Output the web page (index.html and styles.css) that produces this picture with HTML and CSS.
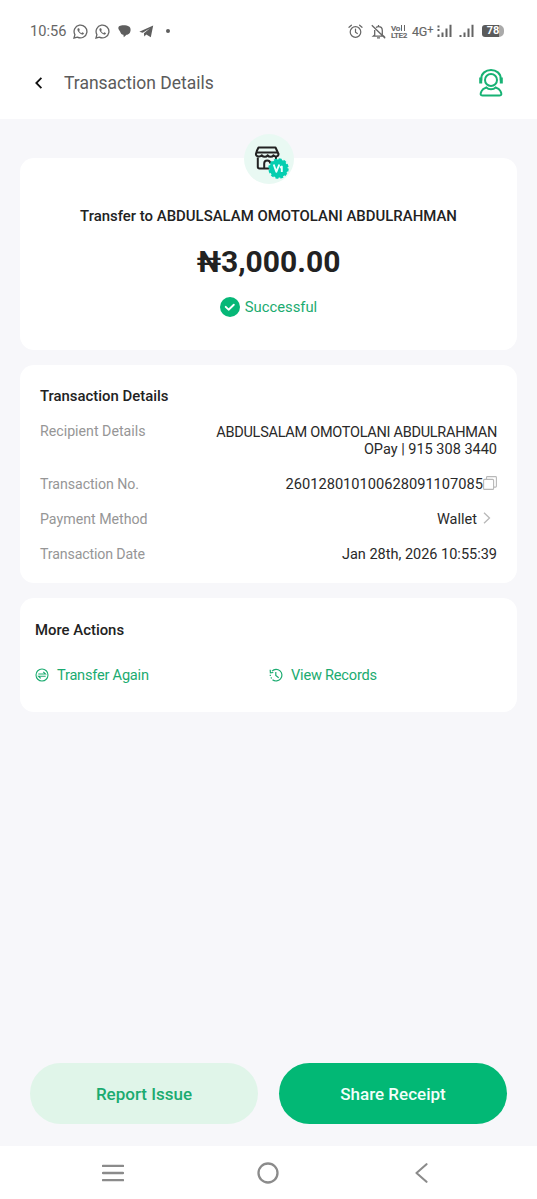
FILE: index.html
```html
<!DOCTYPE html>
<html lang="en">
<head>
<meta charset="utf-8">
<title>Transaction Details</title>
<link rel="stylesheet" href="styles.css">
</head>
<body>
<div class="screen">
  <header class="top">
    <div class="status">
      <div class="status-left">
        <span class="clock">10:56</span>
        <svg class="wa" width="15" height="15" viewBox="0 0 15 15"><path d="M1 14l.9-3.4a6.4 6.4 0 1 1 2.5 2.5z" fill="none" stroke="#666" stroke-width="1.3"/><path d="M5 4.2c-1 .8-.7 2.2.6 3.9s3 2.8 4.2 2.5c1-.3 1.300-1.200 1-1.500L9.300 8.300l-.9.9C7.300 8.700 6.500 7.900 6.100 6.900l.7-.8-.7-1.800z" fill="#666"/></svg>
        <svg class="wa second" width="15" height="15" viewBox="0 0 15 15"><path d="M1 14l.9-3.4a6.4 6.4 0 1 1 2.5 2.5z" fill="none" stroke="#666" stroke-width="1.3"/><path d="M5 4.2c-1 .8-.7 2.2.6 3.9s3 2.8 4.2 2.5c1-.3 1.300-1.200 1-1.500L9.300 8.300l-.9.9C7.300 8.700 6.500 7.900 6.100 6.900l.7-.8-.7-1.800z" fill="#666"/></svg>
        <svg class="chat" width="13" height="13" viewBox="0 0 13 13"><path d="M1.500 1C3.500 0 9 .1 11 1.500c2 1.200 2 4.600.7 6.500-.8 1.200-2.200 1.700-3.200 1.800L5.800 12.200l-.4-2.400C3.400 9.600 2.600 8.200 2.200 6.700L.6 4.200C0 2.900.5 1.500 1.500 1z" fill="#5e5e5e"/></svg>
        <svg class="plane" width="15" height="13" viewBox="0 0 15 13"><path d="M.3 6.700L14.200.5 11.800 12.300 7.300 9.400 5.300 11.500 4.900 8.300 11 3.200 3.700 7.700z" fill="#5e5e5e"/></svg>
        <i class="dot"></i>
      </div>
      <div class="status-right">
        <svg width="15" height="15" viewBox="0 0 15 15" fill="none" stroke="#666" stroke-width="1.2" stroke-linecap="round"><circle cx="7.500" cy="8" r="5.300"/><path d="M7.500 5v3.300L9.300 9.500M1 3.300L3.400 1.200M14 3.300L11.600 1.200"/></svg>
        <svg class="bell" width="15" height="15" viewBox="0 0 15 15" fill="none" stroke="#666" stroke-width="1.3"><path d="M3.700 6v5L2.300 12.200h10.400L11.300 11V6.500C11.300 4 9.700 2.700 7.500 2.700c-1 0-1.800.3-2.500.8M7.500 1v1.500M6 13.800h3M.8 1.200L14.200 14.300"/></svg>
        <div class="volte"><span>Vo<i class="bars"></i></span><span>LTE2</span></div>
        <span class="net">4G<sup>+</sup></span>
        <svg class="sig1" width="15" height="14" viewBox="0 0 15 14" fill="#646464"><path d="M.5 1.500h2v2h-2zM.5 5h2v2h-2zM.5 10.500h2V13h-2zM4.500 8.500h2V13h-2zM8.500 4.500h2V13h-2zM12.500.8h2V13h-2z"/></svg>
        <svg class="sig2" width="15" height="14" viewBox="0 0 15 14" fill="#646464"><path d="M.5 11h2v2h-2zM4.500 8.500h2V13h-2zM8.500 4.500h2V13h-2zM12.500.8h2V13h-2z"/></svg>
        <div class="battery"><span>78</span></div>
      </div>
    </div>
    <div class="bar">
      <svg class="back" width="10" height="14" viewBox="0 0 10 14"><path d="M7.400 1.800L2.300 7l5.100 5.200" fill="none" stroke="#111" stroke-width="1.800"/></svg>
      <h1 class="title">Transaction Details</h1>
      <svg class="support" width="26" height="30" viewBox="0 0 26 30" fill="none" stroke="#17b274" stroke-width="2"><circle cx="13" cy="12" r="6"/><path d="M3.300 12.500V10.500C3.300 5.500 7.600 2 13 2s9.700 3.500 9.700 8.500v2"/><path d="M2.700 9.500v6M23.300 9.500v6" stroke-width="3"/><path d="M8.300 19.500C6 20.200 4.500 21 3.500 23.200c-1.500 3-1 4.300 1 4.300h17c2 0 2.500-1.300 1-4.300-1-2.200-2.500-3-4.800-3.700-1.300 1.300-3 1.800-4.700 1.800s-3.400-.5-4.700-1.800z"/></svg>
    </div>
  </header>
  <main class="content">
    <section class="card summary">
      <div class="avatar"><svg width="50" height="50" viewBox="0 0 50 50"><g fill="none" stroke="#222" stroke-width="2"><path d="M14.500 13.500h17l3 6.500c0 2.600-3.600 3.400-5 1.200-1.200 2.200-4.600 2.200-5.800 0-1.200 2.200-4.600 2.200-5.800 0-1.700 2.200-6 1.400-6-1.200l1-3.300z" stroke-linejoin="round"/><path d="M12 18.500h22M13.800 23.500v9.300q0 1.700 1.700 1.700h10M32 23v4M20.200 34v-4.500a3 3 0 0 1 6 0"/></g><circle cx="34.500" cy="34.500" r="9.200" fill="#05ceb0"/><circle cx="34.500" cy="34.500" r="9.300" fill="none" stroke="#05ceb0" stroke-width="1.800" stroke-dasharray="3 1.870"/><path d="M29.700 30.500l2.600 7.300 3-7.300M36 33.600l1.800-1.100V38" fill="none" stroke="#efffff" stroke-width="1.900" stroke-linejoin="round"/></svg></div>
      <p class="to">Transfer to ABDULSALAM OMOTOLANI ABDULRAHMAN</p>
      <p class="amount">₦3,000.00</p>
      <p class="state"><svg width="20" height="20" viewBox="0 0 20 20"><circle cx="10" cy="10" r="10" fill="#06b777"/><path d="M5.700 9.800l2.900 2.900 5.200-5" fill="none" stroke="#fff" stroke-width="1.900" stroke-linecap="round" stroke-linejoin="round"/></svg><span>Successful</span></p>
    </section>
    <section class="card details">
      <h2>Transaction Details</h2>
      <div class="row recipient"><span class="label">Recipient Details</span><span class="value"><span class="name">ABDULSALAM OMOTOLANI ABDULRAHMAN</span><br>OPay | 915 308 3440</span></div>
      <div class="row"><span class="label number-label">Transaction No.</span><span class="value number">260128010100628091107085</span><svg class="copy" width="14" height="14" viewBox="0 0 14 14" fill="none" stroke="#b8b8b8" stroke-width="1.1"><rect x=".6" y="3.400" width="10" height="10" rx="1"/><path d="M3.500 3.300V1.500q0-.9.9-.9h8.100q.9 0 .9.9v8.700q0 .9-.9.9h-1.700"/></svg></div>
      <div class="row"><span class="label">Payment Method</span><span class="value">Wallet</span><svg class="chev" width="8" height="12" viewBox="0 0 8 12"><path d="M1 .8L6.500 6 1 11.200" fill="none" stroke="#b8b8b8" stroke-width="1.3"/></svg></div>
      <div class="row"><span class="label date-label">Transaction Date</span><span class="value">Jan 28th, 2026 10:55:39</span></div>
    </section>
    <section class="card actions">
      <h2>More Actions</h2>
      <div class="links">
        <a class="link"><svg width="14" height="14" viewBox="0 0 14 14" fill="none" stroke="#1bab70" stroke-width="1.1"><circle cx="7" cy="7" r="6"/><path d="M3.300 6h7.200L8.300 3.800M10.700 8.200H3.500l2.200 2.200"/></svg><span>Transfer Again</span></a>
        <a class="link"><svg width="14" height="14" viewBox="0 0 14 14" fill="none" stroke="#1bab70" stroke-width="1.200"><path d="M3 3.100A5.800 5.800 0 1 1 3.500 11.700"/><path d="M1.200 1.800L1.400 4.800 4.300 4.500M6.800 4v3.400l2.900 2.400"/><path d="M1.300 6.800v1.300M1.900 9.400l.7 1.100"/></svg><span>View Records</span></a>
      </div>
    </section>
  </main>
  <div class="buttons"><button class="btn light">Report Issue</button><button class="btn solid">Share Receipt</button></div>
  <nav class="nav">
    <svg width="22" height="18" viewBox="0 0 22 18"><path d="M1 1.900h20M1 9h20M1 16.100h20" stroke="#8b8b8b" stroke-width="2.400" stroke-linecap="round"/></svg>
    <svg class="home" width="22" height="22" viewBox="0 0 22 22"><circle cx="11" cy="11" r="9.500" fill="none" stroke="#8b8b8b" stroke-width="2.300"/></svg>
    <svg class="nav-back" width="13" height="20" viewBox="0 0 13 20"><path d="M11.500 1.200L1.500 10l10 8.800" fill="none" stroke="#8b8b8b" stroke-width="2.100" stroke-linecap="round" stroke-linejoin="round"/></svg>
  </nav>
</div>
</body>
</html>
```
FILE: styles.css
```css
* { box-sizing: border-box; margin: 0; padding: 0; }
body { font-family: Roboto, "Liberation Sans", sans-serif; background: #f7f7fa; color: #222; }
svg { display: block; flex: none; }
.screen { width: 537px; height: 1199px; display: flex; flex-direction: column; background: #f7f7fa; }
.top { height: 119px; background: #fff; padding-top: 19px; }
.status { height: 24px; display: flex; justify-content: space-between; padding: 0 33px 0 30px; color: #666; }
.status-left, .status-right { display: flex; align-items: center; }
.clock { font-size: 14.6px; width: 43px; white-space: nowrap; }
.second { margin-left: 7px; }
.chat { margin-left: 8px; }
.plane { margin-left: 8px; }
.dot { width: 4px; height: 4px; border-radius: 50%; background: #5e5e5e; margin-left: 12px; }
.bell { margin-left: 8px; }
.volte { display: flex; flex-direction: column; font-size: 8px; line-height: 7px; font-weight: 500; letter-spacing: -.3px; margin-left: 5px; width: 18px; white-space: nowrap; padding-top: 1px; -webkit-text-stroke: .2px #666; }
.bars { display: inline-block; width: 4px; height: 6px; margin-left: 1px; border: solid #666; border-width: 0 1px; }
.net { font-size: 12.5px; width: 22px; margin-left: 3px; white-space: nowrap; -webkit-text-stroke: .2px #666; letter-spacing: -.2px; }
.net sup { font-size: 11px; line-height: 0; vertical-align: 3px; }
.sig1 { margin-left: 3px; }
.sig2 { margin-left: 7px; }
.battery { width: 22px; height: 12px; margin-left: 8px; border-radius: 3px 5px 5px 3px; background: linear-gradient(to right, #5b5b5b 17px, #aaa 17px); color: #fff; font: 700 11px/12px Roboto, sans-serif; text-align: center; }
.bar { display: flex; align-items: center; height: 80px; padding: 0 33px 0 34px; }
.title { font-size: 17.5px; font-weight: 400; color: #5b5b5b; margin: 0 auto 0 20px; }
.content { padding: 39px 20px 0; display: flex; flex-direction: column; gap: 15px; flex: 1; }
.card { background: #fff; border-radius: 14px; position: relative; }
.summary { height: 192px; display: flex; flex-direction: column; align-items: center; padding-top: 48px; }
.avatar { position: absolute; left: 224px; top: -24px; width: 50px; height: 50px; border-radius: 50%; background: #e9f9f3; }
.to { font-size: 14.93px; font-weight: 500; line-height: 20px; white-space: nowrap; }
.amount { font-size: 30px; font-weight: 700; line-height: 36px; margin-top: 18px; }
.state { display: flex; gap: 5px; align-items: center; margin-top: 16px; line-height: 20px; font-size: 14.8px; color: #1bab70; }
.state span { padding-top: 1px; }
.details { height: 218px; padding: 21px 20px 0; }
h2 { font-size: 14.9px; line-height: 20px; font-weight: 500; }
h2, .label, .value { white-space: nowrap; }
.row { display: flex; align-items: center; height: 20px; margin-top: 15px; font-size: 14.5px; line-height: 17px; padding-top: 2px; }
.recipient { height: 37px; }
.recipient .label { align-self: flex-start; }
.label { color: #969696; margin-right: auto; font-size: 14.2px; }
.number-label { letter-spacing: -.07px; }
.date-label { letter-spacing: -.14px; }
.value { color: #292929; text-align: right; }
.name { letter-spacing: -.28px; }
.number { font-size: 14.65px; }
.copy { margin-bottom: 3px; }
.chev { margin: 0 6px 3px; }
.actions { height: 114px; padding: 22px 15px 0; }
.links { display: grid; grid-template-columns: 234px 1fr; margin-top: 25px; }
.link { display: flex; align-items: center; gap: 8px; height: 20px; font-size: 14.6px; letter-spacing: -.22px; color: #1bab70; }
.buttons { display: flex; gap: 21px; height: 83px; padding: 0 30px; }
.btn { width: 228px; height: 61px; border: 0; border-radius: 31px; font: 500 17px/20px Roboto, sans-serif; }
.light { background: #e0f5e9; color: #1bab70; }
.solid { background: #02b875; color: #f3fffa; }
.nav { background: #fff; height: 53px; display: flex; align-items: center; padding-left: 102px; }
.home { margin-left: 133px; }
.nav-back { margin-left: 136px; }
```
